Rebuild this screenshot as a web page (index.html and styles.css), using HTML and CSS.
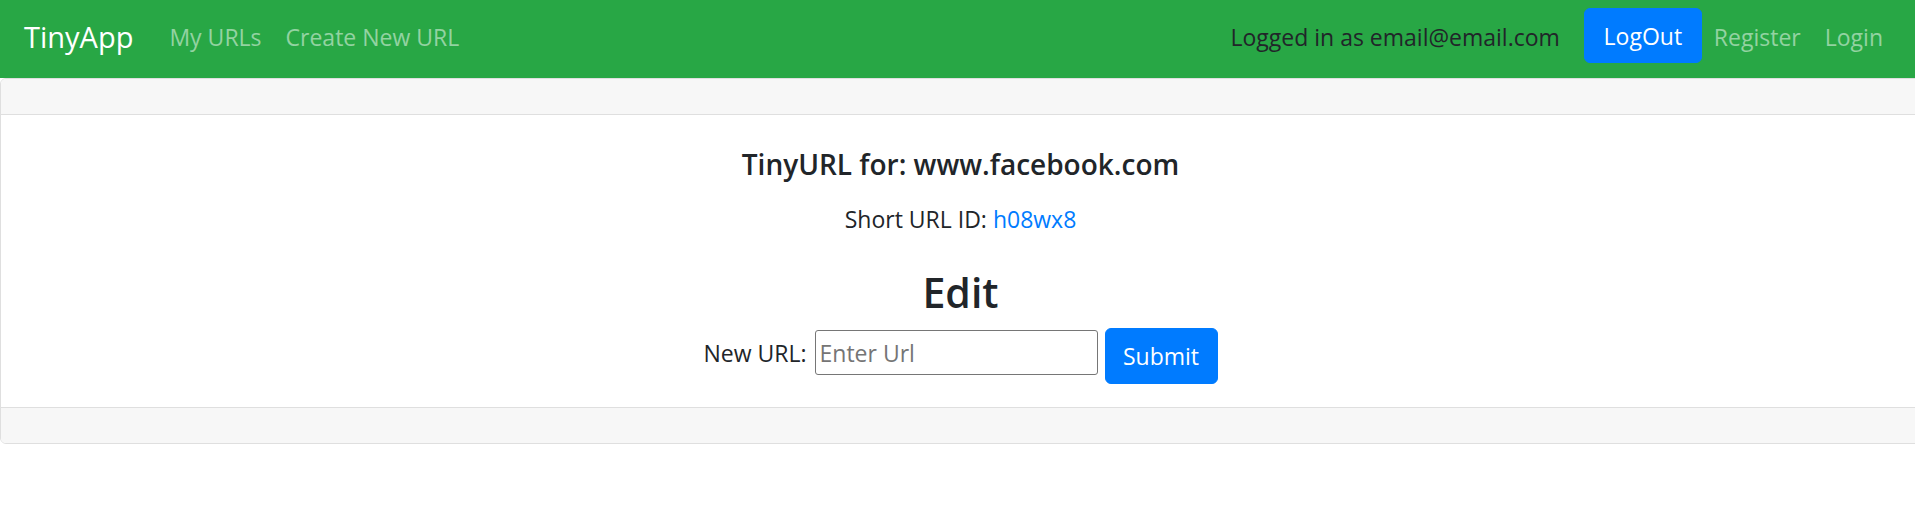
FILE: index.html
```html
<!DOCTYPE html>
<html lang="en">
<head>
<meta charset="utf-8">
<title>TinyApp</title>
<link rel="stylesheet" href="styles.css">
</head>
<body>
<nav class="navbar">
  <a class="brand" href="#">TinyApp</a>
  <div class="nav-left">
    <a class="nav-link" href="#">My URLs</a>
    <a class="nav-link" href="#">Create New URL</a>
  </div>
  <div class="nav-right">
    <span class="nav-text">Logged in as email@email.com</span>
    <button class="btn btn-primary btn-logout" type="button">LogOut</button>
    <a class="nav-link" href="#">Register</a>
    <a class="nav-link" href="#">Login</a>
  </div>
</nav>
<main class="card">
  <div class="card-header"></div>
  <div class="card-body">
    <h5 class="title">TinyURL for: www.facebook.com</h5>
    <p class="short">Short URL ID: <a class="short-link" href="#">h08wx8</a></p>
    <h3 class="edit">Edit</h3>
    <form class="edit-form">
      <label class="form-label" for="newurl">New URL:</label>
      <input class="url-input" id="newurl" type="text" placeholder="Enter Url">
      <button class="btn btn-primary btn-submit" type="submit">Submit</button>
    </form>
  </div>
  <div class="card-footer"></div>
</main>
</body>
</html>
```

FILE: styles.css
```css
* { box-sizing: border-box; }

html, body {
  overflow-x: hidden;
}

body {
  margin: 0;
  font-family: "Open Sans", "Noto Sans", sans-serif;
  font-size: 23px;
  color: #212529;
  background: #ffffff;
}

a { text-decoration: none; }

.navbar {
  display: flex;
  align-items: center;
  height: 78px;
  padding: 0 20px 4px 24px;
  background: #28a745;
}

.brand {
  color: #ffffff;
  font-size: 29px;
  line-height: 44px;
  margin-right: 24px;
}

.nav-left {
  display: flex;
  align-items: center;
}

.nav-right {
  display: flex;
  align-items: center;
  margin-left: auto;
}

.nav-link {
  color: rgba(255, 255, 255, 0.5);
  font-size: 23px;
  line-height: 36px;
  padding: 0 12px;
}

.nav-text {
  color: #212529;
  font-size: 23px;
  line-height: 36px;
  margin-right: 24px;
}

.btn {
  display: inline-flex;
  align-items: center;
  justify-content: center;
  font-family: inherit;
  font-size: 23px;
  color: #ffffff;
  border: 1px solid #007bff;
  background: #007bff;
  border-radius: 6px;
  padding: 0 18px;
  cursor: pointer;
}

.btn-logout {
  width: 118px;
  height: 55px;
  margin-top: -3px;
}

.card {
  display: flex;
  flex-direction: column;
  margin-right: -6px;
  border: 1px solid #dfdfdf;
  border-radius: 6px;
  text-align: center;
}

.card-header {
  height: 36px;
  background: #f7f7f7;
  border-bottom: 1px solid #dfdfdf;
  border-radius: 5px 5px 0 0;
}

.card-body {
  display: flex;
  flex-direction: column;
  align-items: center;
  padding: 31px 0 23px;
}

.title {
  margin: 0 0 19px;
  font-size: 28px;
  font-weight: 600;
  line-height: 36px;
}

.short {
  margin: 0 0 30px;
  font-size: 23px;
  line-height: 36px;
}

.short-link { color: #007bff; }

.edit {
  margin: 0 0 11px;
  font-size: 41px;
  font-weight: 600;
  line-height: 50px;
}

.edit-form {
  display: flex;
  align-items: flex-start;
}

.form-label {
  font-size: 23px;
  line-height: 36px;
  margin-top: 7px;
  margin-right: 8px;
}

.url-input {
  width: 283px;
  height: 45px;
  margin-top: 2px;
  margin-right: 7px;
  padding: 0 4px;
  font-family: inherit;
  font-size: 23px;
  color: #212529;
  border: 1px solid #767676;
  border-radius: 3px;
}

.url-input::placeholder { color: #757575; }

.btn-submit {
  width: 113px;
  height: 56px;
}

.card-footer {
  height: 36px;
  background: #f7f7f7;
  border-top: 1px solid #dfdfdf;
  border-radius: 0 0 5px 5px;
}
```
